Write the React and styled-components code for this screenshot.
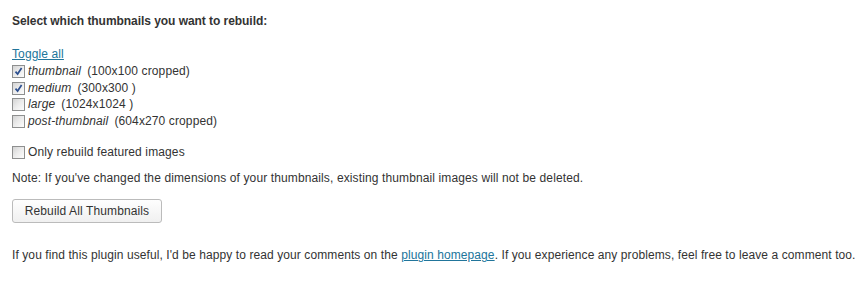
import React from "react"
import styled, { createGlobalStyle } from "styled-components"

const GlobalStyle = createGlobalStyle`
body {
  margin: 0;
  background: #fff;
  font-family: "Liberation Sans", Arial, sans-serif;
  font-size: 12px;
  color: #333;
}
`

const Wrap = styled.div`
display: flex;
flex-direction: column;
align-items: flex-start;
padding: 13px 12px 0 12px;
line-height: 17px;
letter-spacing: 0.12px;
`
const Heading = styled.p`
margin: 0 0 16px 0;
font-weight: bold;
letter-spacing: -0.05px;
`
const Toggle = styled.a`
color: #21759b;
text-decoration: underline;
cursor: pointer;
line-height: 17px;
`
const SizeList = styled.div`
display: flex;
flex-direction: column;
`
const Row = styled.label`
display: flex;
align-items: center;
height: 16.7px;
gap: 3px;
`
const Box = styled.span`
width: 13px;
height: 13px;
box-sizing: border-box;
border: 1px solid #8e8f8f;
background: linear-gradient(135deg, #d4d4d4 0%, #ececec 50%, #fdfdfd 100%);
display: flex;
align-items: center;
justify-content: center;
flex-shrink: 0;
`
const Name = styled.em`
margin-right: 6px;
`
const Featured = styled(Row)`
margin-top: 14px;
`
const Note = styled.p`
margin: 10px 0 0 0;
`
const Button = styled.button`
margin-top: 12px;
width: 150px;
height: 24px;
border: 1px solid #bbb;
border-radius: 3px;
background: linear-gradient(#fefefe, #f0f0f0);
font-family: inherit;
font-size: 12px;
letter-spacing: 0.12px;
color: #333;
padding: 0;
`
const Footer = styled.p`
margin: 24px 0 0 0;
white-space: nowrap;
letter-spacing: 0.09px;
`
const Link = styled.a`
color: #21759b;
text-decoration: underline;
`

function Check({ checked }) {
  return (
    <Box>
      {checked ? (
        <svg width="9" height="9" viewBox="0 0 9 9">
          <path d="M1.5 4.6 L3.6 7 L7.6 1" fill="none" stroke="#2c4f8f" strokeWidth="1.7" />
        </svg>
      ) : null}
    </Box>
  )
}

const sizes = [
  { name: "thumbnail", dims: "(100x100 cropped)", checked: true },
  { name: "medium", dims: "(300x300 )", checked: true },
  { name: "large", dims: "(1024x1024 )", checked: false },
  { name: "post-thumbnail", dims: "(604x270 cropped)", checked: false },
]

export default function App() {
  return (
    <Wrap>
      <GlobalStyle />
      <Heading>Select which thumbnails you want to rebuild:</Heading>
      <Toggle>Toggle all</Toggle>
      <SizeList>
        {sizes.map((s) => (
          <Row key={s.name}>
            <Check checked={s.checked} />
            <span><Name>{s.name}</Name>{s.dims}</span>
          </Row>
        ))}
      </SizeList>
      <Featured>
        <Check />
        <span>Only rebuild featured images</span>
      </Featured>
      <Note>Note: If you've changed the dimensions of your thumbnails, existing thumbnail images will not be deleted.</Note>
      <Button>Rebuild All Thumbnails</Button>
      <Footer>
        If you find this plugin useful, I'd be happy to read your comments on the <Link>plugin homepage</Link>. If you experience any problems, feel free to leave a comment too.
      </Footer>
    </Wrap>
  )
}
